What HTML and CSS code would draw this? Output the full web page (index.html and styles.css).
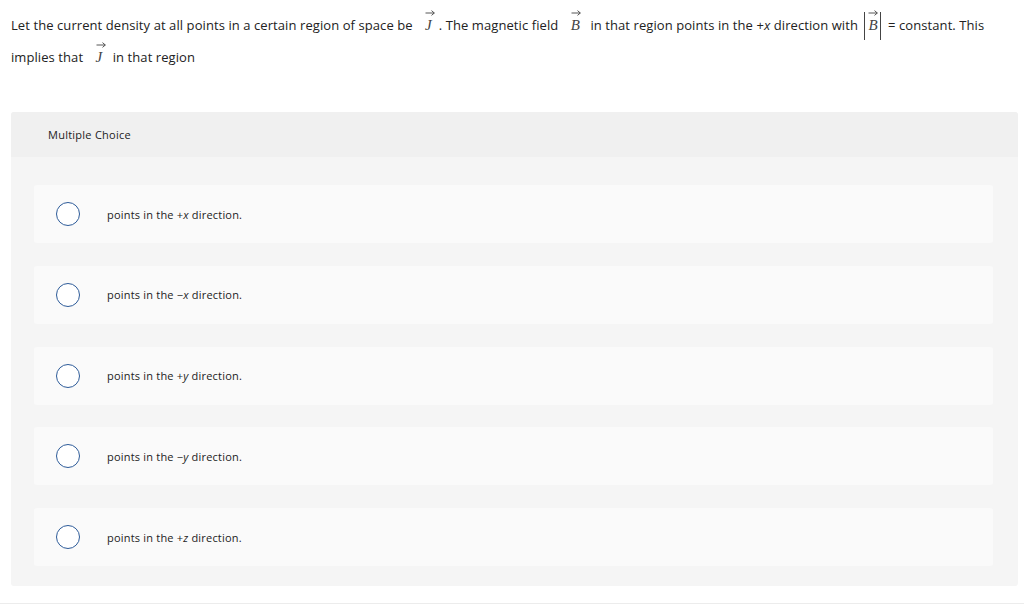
FILE: index.html
```html
<!DOCTYPE html>
<html>
<head>
<meta charset="utf-8">
<link rel="stylesheet" href="styles.css">
</head>
<body>
<div class="page">
  <p class="question">Let the current density at all points in a certain region of space be <span class="vec"><svg class="arrow" viewBox="0 0 10 6" width="10" height="6"><path d="M0.5 3H9.3M6.5 0.6L9.3 3L6.5 5.4" fill="none" stroke="#444" stroke-width="0.9"/></svg><span class="sym">J</span></span>. The magnetic field <span class="vec"><svg class="arrow" viewBox="0 0 10 6" width="10" height="6"><path d="M0.5 3H9.3M6.5 0.6L9.3 3L6.5 5.4" fill="none" stroke="#444" stroke-width="0.9"/></svg><span class="sym">B</span></span> in that region points in the +<i>x</i> direction with <span class="abs"><span class="vec"><svg class="arrow" viewBox="0 0 10 6" width="10" height="6"><path d="M0.5 3H9.3M6.5 0.6L9.3 3L6.5 5.4" fill="none" stroke="#444" stroke-width="0.9"/></svg><span class="sym">B</span></span></span> = constant. This<br>implies that <span class="vec"><svg class="arrow" viewBox="0 0 10 6" width="10" height="6"><path d="M0.5 3H9.3M6.5 0.6L9.3 3L6.5 5.4" fill="none" stroke="#444" stroke-width="0.9"/></svg><span class="sym">J</span></span> in that region</p>

  <div class="mc">
    <div class="mc-head">Multiple Choice</div>
    <div class="mc-body">
      <div class="opt"><span class="radio"></span><span class="label">points in the +<i>x</i> direction.</span></div>
      <div class="opt"><span class="radio"></span><span class="label">points in the −<i>x</i> direction.</span></div>
      <div class="opt"><span class="radio"></span><span class="label">points in the +<i>y</i> direction.</span></div>
      <div class="opt"><span class="radio"></span><span class="label">points in the −<i>y</i> direction.</span></div>
      <div class="opt"><span class="radio"></span><span class="label">points in the +<i>z</i> direction.</span></div>
    </div>
  </div>
  <div class="rule"></div>
</div>
</body>
</html>
```

FILE: styles.css
```css
html, body {
  margin: 0;
  padding: 0;
  background: #ffffff;
}
body {
  font-family: "Open Sans", "Liberation Sans", Arial, sans-serif;
  color: #222222;
}
.page {
  padding: 0 6px 0 11px;
}
.question {
  margin: 0;
  padding-top: 9px;
  font-size: 13px;
  line-height: 32px;
  letter-spacing: 0.08px;
  color: #222;
  width: 1000px;
}
.vec {
  position: relative;
  display: inline-block;
  line-height: 14px;
  margin: 0 7px 0 9px;
  letter-spacing: 0;
}
.vec .sym {
  font-family: "Liberation Serif", "Times New Roman", serif;
  font-style: italic;
  font-size: 15px;
  color: #444;
}
.vec .arrow {
  position: absolute;
  left: 0;
  top: -8px;
  display: block;
}
.abs {
  position: relative;
  display: inline-block;
  line-height: 14px;
  padding: 0 3px 0 4px;
  margin: 0 4px 0 3px;
}
.abs::before,
.abs::after {
  content: "";
  position: absolute;
  top: -6px;
  bottom: -8px;
  width: 1px;
  background: #444;
}
.abs::before { left: 0; }
.abs::after { right: 0; }
.abs .vec {
  margin: 0;
}
.mc {
  margin-top: 39px;
  background: #f5f5f5;
  border-radius: 3px;
  overflow: hidden;
}
.mc-head {
  background: #f0f0f0;
  height: 45px;
  padding-left: 37px;
  display: flex;
  align-items: center;
  font-size: 11px;
  letter-spacing: 0.25px;
  color: #222;
}
.mc-body {
  padding: 28px 25px 20px 23px;
  display: flex;
  flex-direction: column;
  gap: 22.75px;
}
.opt {
  background: #fafafa;
  height: 58px;
  border-radius: 3px;
  display: flex;
  align-items: center;
  padding-left: 22px;
}
.radio {
  width: 22px;
  height: 22px;
  border: 1.5px solid #2d5b99;
  border-radius: 50%;
  background: #fff;
  flex: none;
}
.label {
  margin-left: 27px;
  font-size: 11px;
  letter-spacing: 0.2px;
  color: #222;
}
.rule {
  margin-top: 17px;
  margin-left: -11px;
  margin-right: -6px;
  height: 1px;
  background: #ececec;
}
```
